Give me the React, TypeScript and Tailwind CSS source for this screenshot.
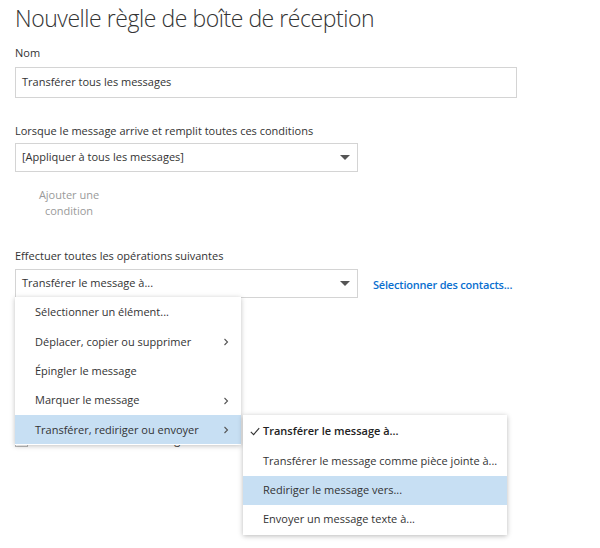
import React from "react";

const Chevron = () => (
  <svg width="8" height="10" viewBox="0 0 8 10" className="shrink-0">
    <path d="M2.5 2 L5.5 5 L2.5 8" fill="none" stroke="#555" strokeWidth="1.1" />
  </svg>
);

const Caret = () => (
  <svg width="10" height="6" viewBox="0 0 10 6" className="shrink-0">
    <path d="M0 0 L10 0 L5 5 Z" fill="#555" />
  </svg>
);

const Check = () => (
  <svg width="10" height="9" viewBox="0 0 10 9" className="shrink-0">
    <path d="M0.8 4.8 L3.6 7.6 L9.2 1.2" fill="none" stroke="#333" strokeWidth="1.1" />
  </svg>
);

export default function App() {
  const font = { fontFamily: '"Open Sans", "Noto Sans", sans-serif' };
  return (
    <div
      className="relative w-[600px] h-[548px] overflow-hidden bg-white pl-[15px] text-[#333]"
      style={font}
    >
      <h1 className="pt-[2px] text-[23px] leading-[33px] font-light text-[#333] tracking-[-0.45px]">
        Nouvelle règle de boîte de réception
      </h1>

      <div className="mt-[10px] text-[11px] leading-[16px]">Nom</div>
      <div className="mt-[6px] flex h-[31px] w-[502px] items-center border border-[#d4d4d4] px-[6px] text-[11px] text-[#333]">
        Transférer tous les messages
      </div>

      <div className="mt-[25px] text-[11px] leading-[16px]">
        Lorsque le message arrive et remplit toutes ces conditions
      </div>
      <div className="mt-[4px] flex h-[29px] w-[343px] items-center justify-between border border-[#d4d4d4] pl-[6px] pr-[7px] text-[11px]">
        <span>[Appliquer à tous les messages]</span>
        <Caret />
      </div>

      <div className="ml-[8px] mt-[15px] w-[92px] text-center text-[11px] leading-[16px] text-[#9a9a9a]">
        Ajouter une
        <br />
        condition
      </div>

      <div className="mt-[29px] text-[11px] leading-[16px]">
        Effectuer toutes les opérations suivantes
      </div>
      <div className="relative mt-[5px] flex items-center">
        <div className="flex h-[29px] w-[343px] items-center justify-between border border-[#d4d4d4] pl-[6px] pr-[7px] text-[11px]">
          <span>Transférer le message à...</span>
          <Caret />
        </div>
        <span className="ml-[15px] mt-[3px] text-[11px] font-semibold tracking-[-0.2px] text-[#0a6fcf]">
          Sélectionner des contacts...
        </span>

        <div className="absolute left-0 top-[28px] z-20 w-[226px] bg-white pt-[1px] pb-[1px] shadow-[0_1px_5px_rgba(0,0,0,0.25)] text-[11px]">
          {[
            ["Sélectionner un élément...", false, false],
            ["Déplacer, copier ou supprimer", true, false],
            ["Épingler le message", false, false],
            ["Marquer le message", true, false],
            ["Transférer, rediriger ou envoyer", true, true],
          ].map(([label, sub, active]) => (
            <div
              key={label as string}
              className={`flex h-[29.3px] items-center justify-between pl-[20px] pr-[11px] ${
                active ? "bg-[#c7dff3]" : ""
              }`}
            >
              <span>{label as string}</span>
              {sub ? <Chevron /> : null}
            </div>
          ))}
        </div>

        <div className="absolute left-[228px] top-[146px] z-30 w-[264px] bg-white pt-[2px] pb-[1px] shadow-[0_1px_5px_rgba(0,0,0,0.28)] text-[11px]">
          {[
            ["Transférer le message à...", true, false],
            ["Transférer le message comme pièce jointe à...", false, false],
            ["Rediriger le message vers...", false, true],
            ["Envoyer un message texte à...", false, false],
          ].map(([label, checked, active]) => (
            <div
              key={label as string}
              className={`flex h-[29.3px] items-center pl-[7px] ${active ? "bg-[#c7dff3]" : ""}`}
            >
              <span className="flex w-[13px] items-center">{checked ? <Check /> : null}</span>
              <span className={`whitespace-nowrap ${checked ? "font-semibold text-[#222]" : ""}`}>
                {label as string}
              </span>
            </div>
          ))}
        </div>
      </div>

      <div className="mt-[134px] flex items-center gap-[6px] text-[11px] text-[#333]">
        <span className="h-[13px] w-[13px] border border-[#bbb]" />
        <span>Arrêter le traitement des règles</span>
      </div>
    </div>
  );
}
